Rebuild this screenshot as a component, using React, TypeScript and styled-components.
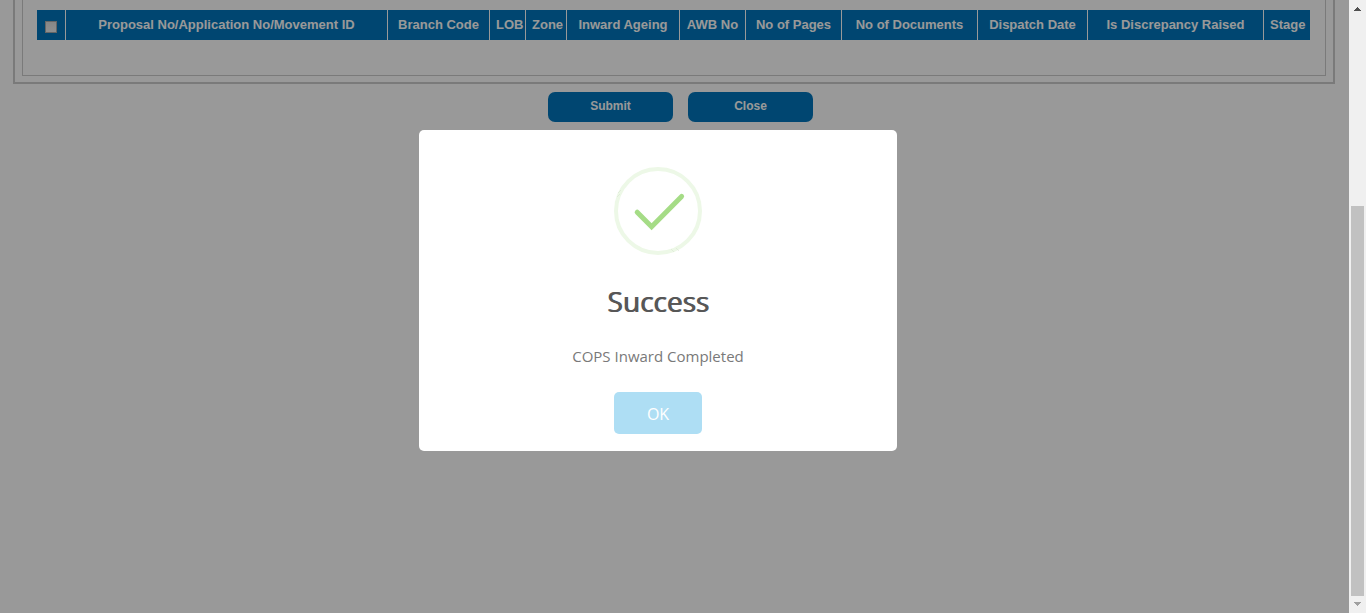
import React from 'react';
import styled, { createGlobalStyle } from 'styled-components';

const GlobalStyle = createGlobalStyle`
  *, *::before, *::after { box-sizing: border-box; }
  body {
    margin: 0;
    background: #fff;
    font-family: "Liberation Sans", Arial, sans-serif;
  }
`;

const Shell = styled.div`
  display: flex;
  min-height: 100vh;
`;

const Page = styled.main`
  flex: 1;
  min-width: 0;
  padding: 0 14px 0 13px;
`;

const Panel = styled.section`
  border: 2px solid #ccc;
  border-top: 0;
  padding: 0 7px 6px;
`;

const PanelBody = styled.div`
  border: 1px solid #ccc;
  border-top: 0;
  padding: 10px 15px 35px 14px;
`;

const Table = styled.table`
  width: 100%;
  table-layout: fixed;
  border-collapse: separate;
  border-spacing: 0;
`;

const HeadCell = styled.th<{ $width?: number }>`
  width: ${({ $width }) => ($width ? `${$width}px` : 'auto')};
  height: 30px;
  padding: 0 6px;
  background: #0076bc;
  border-right: 1px solid #fff;
  color: #fff;
  font-size: 13px;
  font-weight: 700;
  line-height: 16px;
  text-align: center;
  vertical-align: middle;
  white-space: nowrap;

  &:last-child { border-right: 0; }
`;

const SelectAll = styled.input`
  appearance: none;
  display: block;
  width: 12px;
  height: 12px;
  margin: 4px auto 0;
  border: 1px solid #aaa;
  background: linear-gradient(#e0e0e0, #f0f0f0);
`;

const Actions = styled.div`
  display: flex;
  justify-content: center;
  gap: 15px;
  padding: 8px 0 0 12px;
`;

const ActionButton = styled.button`
  width: 125px;
  height: 30px;
  padding: 0 0 2px 1px;
  border: 0;
  border-radius: 7px;
  background: #0076bc;
  color: #fff;
  font: 700 12px/16px "Liberation Sans", Arial, sans-serif;
`;

const Overlay = styled.div`
  position: fixed;
  inset: 0 17px 0 0;
  display: flex;
  justify-content: center;
  align-items: flex-start;
  padding: 130px 33px 0 0;
  background: rgba(0, 0, 0, 0.4);
`;

const Dialog = styled.div`
  display: flex;
  flex-direction: column;
  align-items: center;
  width: 478px;
  padding: 37px 17px 17px;
  border-radius: 5px;
  background: #fff;
  font-family: "Open Sans", "Noto Sans", sans-serif;
  text-align: center;
`;

const DialogTitle = styled.h2`
  margin: 26px 0 24px;
  color: #575757;
  font-size: 28px;
  font-weight: 400;
  line-height: 40px;
  text-shadow: 1px 0 0 #575757;
`;

const DialogText = styled.p`
  margin: 0 0 24px;
  color: #797979;
  font-size: 15px;
  font-weight: 400;
  line-height: 23px;
`;

const OkButton = styled.button`
  width: 88px;
  height: 42px;
  padding: 1px 0 0;
  border: 0;
  border-radius: 5px;
  background: #aedef4;
  color: #fff;
  font: 400 16px/24px "Open Sans", "Noto Sans", sans-serif;
`;

const Scrollbar = styled.div`
  display: flex;
  flex-direction: column;
  align-items: center;
  width: 17px;
  height: 100vh;
  background: #f0f0f0;
`;

const Arrow = styled.svg`
  display: block;
  flex: none;
  width: 17px;
  height: 17px;
`;

const Track = styled.div`
  flex: 1;
  display: flex;
  flex-direction: column;
  justify-content: flex-end;
`;

const Thumb = styled.div`
  width: 13px;
  height: 390px;
  background: #c1c1c1;
`;

const columns: { label: string; width?: number }[] = [
  { label: 'Proposal No/Application No/Movement ID' },
  { label: 'Branch Code', width: 102 },
  { label: 'LOB', width: 36 },
  { label: 'Zone', width: 41 },
  { label: 'Inward Ageing', width: 113 },
  { label: 'AWB No', width: 66 },
  { label: 'No of Pages', width: 96 },
  { label: 'No of Documents', width: 136 },
  { label: 'Dispatch Date', width: 110 },
  { label: 'Is Discrepancy Raised', width: 176 },
  { label: 'Stage', width: 46 },
];

function SuccessIcon() {
  return (
    <svg width="88" height="88" viewBox="0 0 88 88" fill="none" aria-hidden="true">
      <circle cx="44" cy="44" r="42" stroke="#edf8e7" strokeWidth="4" />
      <path
        d="M3 30l3-3M4 26l3-3M57 82l3 3M62 81l3 3"
        stroke="#d5e3cd"
        strokeWidth="0.5"
      />
      <path
        d="M23.2 45.2L37.6 59.8L67.6 29.4"
        stroke="#a5dc86"
        strokeWidth="5"
        strokeLinecap="round"
      />
    </svg>
  );
}

export default function App() {
  return (
    <>
      <GlobalStyle />
      <Shell>
        <Page>
          <Panel>
            <PanelBody>
              <Table>
                <thead>
                  <tr>
                    <HeadCell scope="col" $width={29}>
                      <SelectAll type="checkbox" aria-label="Select all" />
                    </HeadCell>
                    {columns.map(({ label, width }) => (
                      <HeadCell key={label} scope="col" $width={width}>
                        {label}
                      </HeadCell>
                    ))}
                  </tr>
                </thead>
              </Table>
            </PanelBody>
          </Panel>
          <Actions>
            <ActionButton type="button">Submit</ActionButton>
            <ActionButton type="button">Close</ActionButton>
          </Actions>
        </Page>
        <Scrollbar aria-hidden="true">
          <Arrow viewBox="0 0 17 17">
            <path d="M5 11h7v-1h-1v-1h-1v-1h-1v-1h-1v1h-1v1h-1v1h-1z" fill="#505050" />
          </Arrow>
          <Track>
            <Thumb />
          </Track>
          <Arrow viewBox="0 0 17 17">
            <path d="M5 6h7v1h-1v1h-1v1h-1v1h-1v-1h-1v-1h-1v-1h-1z" fill="#a0a0a0" />
          </Arrow>
        </Scrollbar>
      </Shell>
      <Overlay>
        <Dialog role="dialog" aria-modal="true" aria-labelledby="dialog-title">
          <SuccessIcon />
          <DialogTitle id="dialog-title">Success</DialogTitle>
          <DialogText>COPS Inward Completed</DialogText>
          <OkButton type="button">OK</OkButton>
        </Dialog>
      </Overlay>
    </>
  );
}
